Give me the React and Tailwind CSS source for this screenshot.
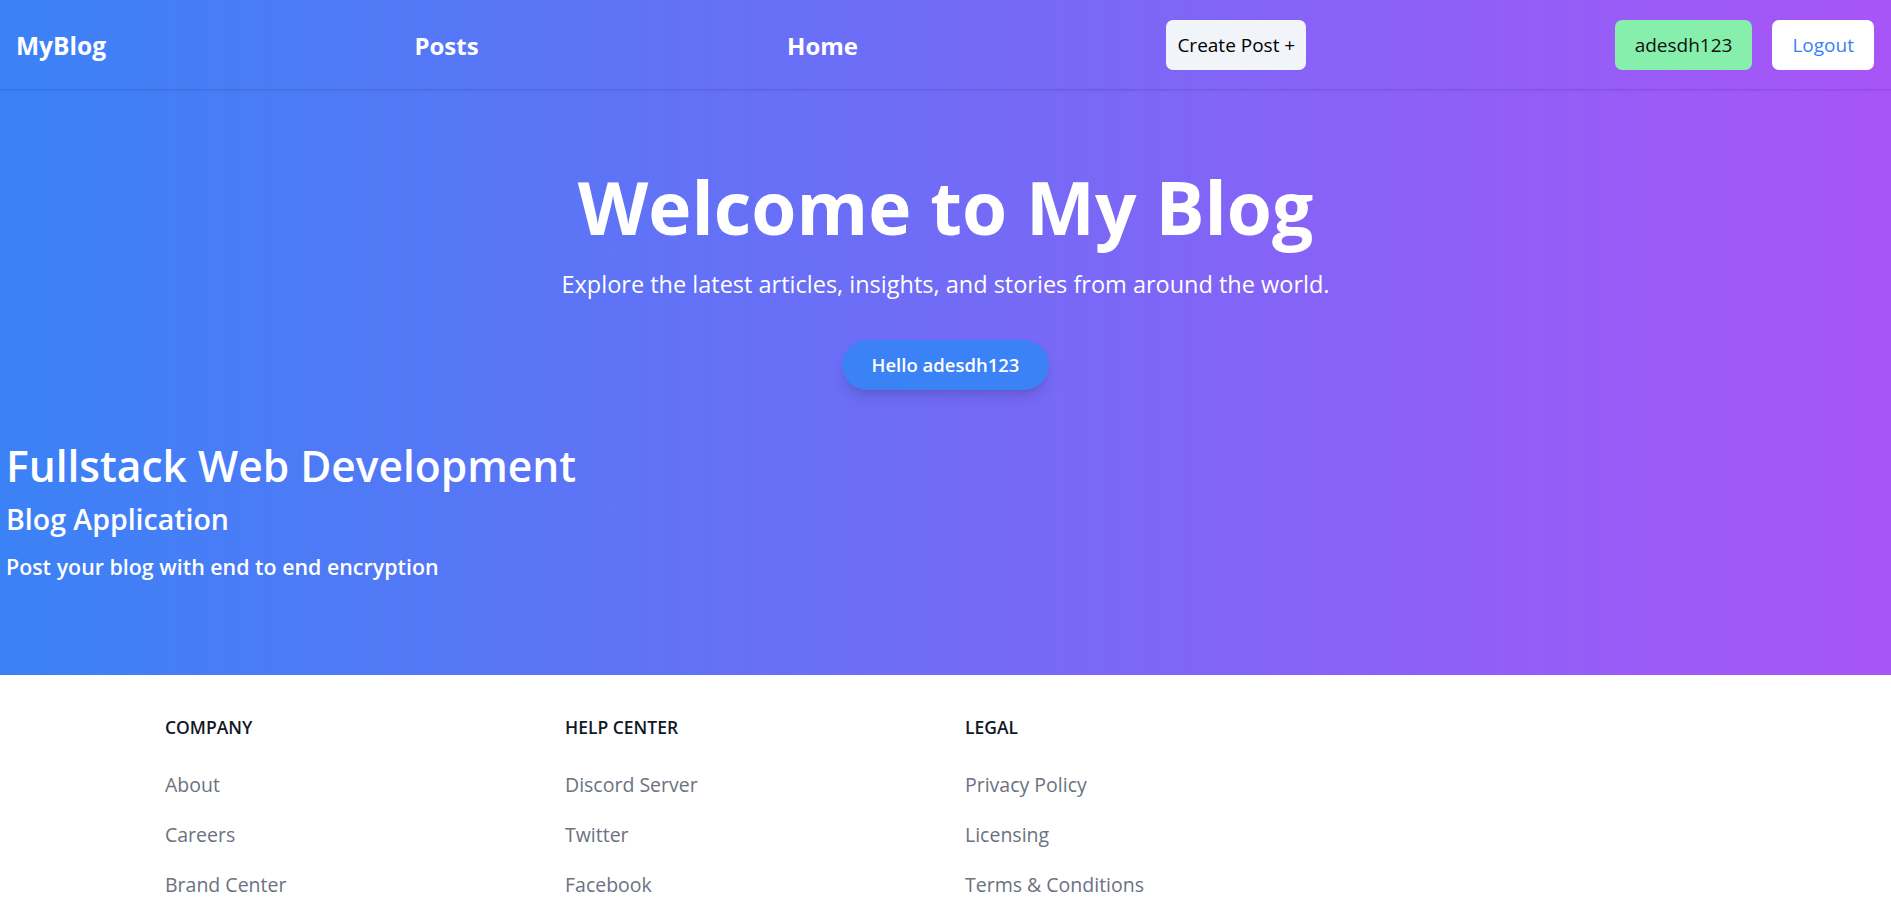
export default function App() {
  const footerCols = [
    { title: "Company", links: ["About", "Careers", "Brand Center"] },
    { title: "Help center", links: ["Discord Server", "Twitter", "Facebook"] },
    { title: "Legal", links: ["Privacy Policy", "Licensing", "Terms & Conditions"] },
    { title: "", links: [] },
  ];

  return (
    <div className="min-h-screen bg-white font-['Open_Sans',_'Noto_Sans',_sans-serif]">
      <div className="bg-[linear-gradient(to_right,#3b82f6,#a855f7)] h-[675px]">
        {/* navbar */}
        <nav className="h-[90px] flex items-center justify-between pl-4 pr-[17px] border-b border-black/10 shadow-[0_1px_2px_rgba(0,0,0,0.08)]">
          <a className="pt-[3px] text-[24.5px] font-bold text-white">MyBlog</a>
          <a className="pt-[3px] text-[24px] font-bold text-white">Posts</a>
          <a className="pt-[3px] text-[24px] font-bold text-white">Home</a>
          <button className="h-[50px] px-[11px] pt-[2px] rounded-[7px] bg-[#f1f5f9] text-[19px] text-black">
            Create Post +
          </button>
          <div className="flex items-center gap-[20px]">
            <button className="h-[50px] px-[20px] pt-[2px] rounded-[7px] bg-[#86efac] text-[19px] text-[#111]">
              adesdh123
            </button>
            <button className="h-[50px] px-[20px] pt-[2px] rounded-[7px] bg-white text-[19px] text-[#3b82f6]">
              Logout
            </button>
          </div>
        </nav>

        {/* hero */}
        <section className="text-center text-white pt-[80px]">
          <h1 className="text-[73px] leading-none font-bold">Welcome to My Blog</h1>
          <p className="mt-[26px] text-[23.5px] leading-[30px]">
            Explore the latest articles, insights, and stories from around the world.
          </p>
          <button className="mt-[41px] h-[50px] px-[30px] rounded-full bg-[#3b82f6] text-[18.5px] font-semibold text-white shadow-[0_10px_15px_-3px_rgba(0,0,0,0.12),0_4px_6px_-4px_rgba(0,0,0,0.12)]">
            Hello adesdh123
          </button>
        </section>

        <section className="text-white px-[6px] mt-[49px]">
          <h2 className="text-[42.5px] leading-[54px] font-semibold">Fullstack Web Development</h2>
          <h3 className="mt-[8px] text-[28.5px] leading-[36px] font-semibold">Blog Application</h3>
          <p className="mt-[15px] text-[21.4px] leading-[30px] font-semibold">
            Post your blog with end to end encryption
          </p>
        </section>
      </div>

      {/* footer */}
      <footer className="bg-white">
        <div className="flex pl-[165px] py-[40px]">
          {footerCols.map((col, i) => (
            <div key={i} className="w-[400px]">
              {col.title && (
                <h2 className="mb-[30px] text-[17.5px] leading-[25px] font-semibold uppercase text-[#111827]">
                  {col.title}
                </h2>
              )}
              <ul className="text-[19.5px] leading-[30px] font-medium text-[#6b7280]">
                {col.links.map((l) => (
                  <li key={l} className="mb-[20px]">
                    <a>{l}</a>
                  </li>
                ))}
              </ul>
            </div>
          ))}
        </div>
      </footer>
    </div>
  );
}
